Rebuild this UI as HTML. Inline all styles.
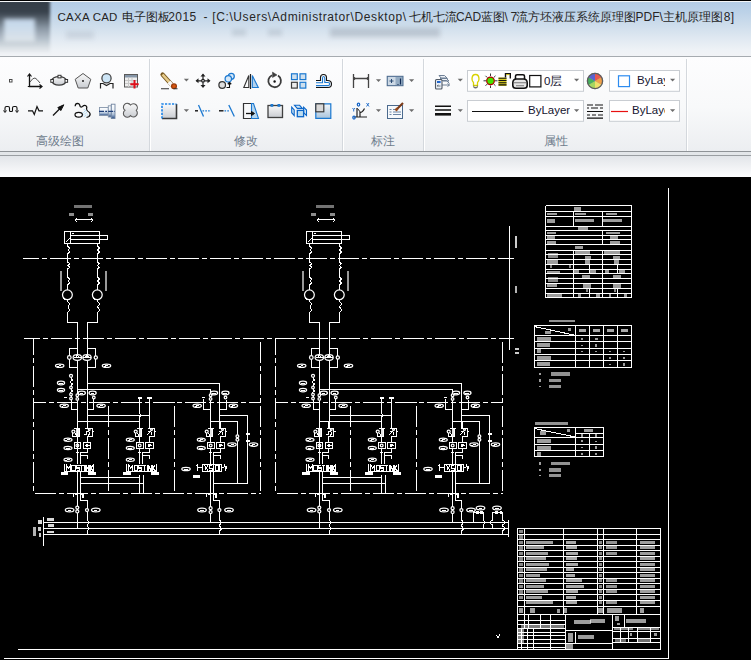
<!DOCTYPE html>
<html><head><meta charset="utf-8">
<style>
*{margin:0;padding:0;box-sizing:border-box}
html,body{width:751px;height:660px;overflow:hidden;background:#000;font-family:"Liberation Sans",sans-serif}
.abs{position:absolute}
#title{left:0;top:0;width:751px;height:57px;background:linear-gradient(180deg,#b2cbe5 0px,#bcd2e8 12px,#cfdeec 26px,#e2eaf2 40px,#eef2f6 50px,#f1f3f6 56px)}
#blob{left:-4px;top:0;width:54px;height:52px;background:linear-gradient(180deg,#333c46 0,#38414b 12px,#5a6570 19px,#8a97a4 28px,#b9c4ce 40px,#e3e7eb 50px);filter:blur(1.5px)}
#blob2{left:4px;top:19px;width:31px;height:23px;background:linear-gradient(180deg,#c3d5e8 0,#cbdcec 8px,#d5e0ea 16px,#dfe5ea 23px);filter:blur(2px)}
#ttext{left:0;top:10px;width:751px;height:18px;font-size:12px;color:#262626;white-space:nowrap}
.ts{position:absolute;top:0}
#ribbon{left:0;top:57px;width:751px;height:94px;background:linear-gradient(180deg,#fdfdfe 0,#f8f9fa 50px,#eceef1 94px)}
#band{left:0;top:151px;width:751px;height:26px;background:linear-gradient(180deg,#8f9397 0,#8f9397 1px,#e3e6e9 1px,#e3e6e9 4px,#9a9ea2 4px,#9a9ea2 5px,#e2e5e9 5px,#fdfdfe 26px)}
.sep{top:59px;width:2px;height:92px;background:linear-gradient(90deg,#d4d8dd 0,#d4d8dd 1px,#fff 1px)}
.lbl{top:133px;font-size:12px;color:#6e7c8c;white-space:nowrap}
.ct{font-size:11.5px;color:#151530;white-space:nowrap;overflow:hidden}
#canvas{left:0;top:177px;width:751px;height:483px;background:#000}
</style></head><body>
<div id="title" class="abs"></div>
<div class="abs" style="left:330px;top:28px;width:110px;height:9px;background:rgba(80,92,105,0.22);filter:blur(2.5px)"></div>
<div class="abs" style="left:232px;top:29px;width:14px;height:7px;background:rgba(80,92,105,0.15);filter:blur(2px)"></div>
<div class="abs" style="left:268px;top:29px;width:14px;height:7px;background:rgba(80,92,105,0.15);filter:blur(2px)"></div>
<div class="abs" style="left:66px;top:31px;width:28px;height:8px;background:rgba(80,92,105,0.12);filter:blur(2.5px)"></div>
<div id="blob" class="abs"></div>
<div id="blob2" class="abs"></div>
<div class="abs" style="left:0;top:0;width:751px;height:1px;background:#000"></div>
<div class="abs" style="left:0;top:1px;width:751px;height:1px;background:#f4f6f8"></div>
<div id="ttext" class="abs"><span class="ts" style="left:57.5px;top:0.5px;letter-spacing:0.25px;font-size:11.5px">CAXA CAD </span><span class="ts" style="left:122px;letter-spacing:0px;font-size:11.7px">电子图板</span><span class="ts" style="left:168.3px;letter-spacing:0.4px;font-size:12px">2015</span><span class="ts" style="left:203.5px;letter-spacing:0px;font-size:12px">-</span><span class="ts" style="left:212.2px;letter-spacing:0.62px;font-size:12px">[C:\Users\Administrator\Desktop\</span><span class="ts" style="left:408.8px;letter-spacing:0px;font-size:11.7px">七机七流</span><span class="ts" style="left:455.9px;letter-spacing:0px;font-size:12px">CAD</span><span class="ts" style="left:480.7px;letter-spacing:0px;font-size:11.7px">蓝图</span><span class="ts" style="left:504.6px;letter-spacing:0px;font-size:12px">\</span><span class="ts" style="left:510.6px;letter-spacing:0px;font-size:12px">7</span><span class="ts" style="left:516.2px;letter-spacing:0px;font-size:11.7px">流方坯液压系统原理图</span><span class="ts" style="left:635.6px;letter-spacing:0px;font-size:12px">PDF\</span><span class="ts" style="left:662.6px;letter-spacing:0px;font-size:11.7px">主机原理图</span><span class="ts" style="left:723.8px;letter-spacing:0.4px;font-size:12px">8]</span></div>
<div class="abs" style="left:0;top:56px;width:751px;height:1px;background:#a6abb0"></div>
<div id="ribbon" class="abs"></div>
<div class="sep abs" style="left:149px"></div>
<div class="sep abs" style="left:342px"></div>
<div class="sep abs" style="left:423px"></div>
<div class="sep abs" style="left:686px"></div>
<div class="lbl abs" style="left:36px">高级绘图</div>
<div class="lbl abs" style="left:234px">修改</div>
<div class="lbl abs" style="left:371px">标注</div>
<div class="lbl abs" style="left:544px">属性</div>
<div id="band" class="abs"></div>
<svg class="abs" style="left:0;top:0" width="751" height="177" viewBox="0 0 751 177">
<defs>
<linearGradient id="gg" x1="0" y1="0" x2="0" y2="1"><stop offset="0" stop-color="#fafafa"/><stop offset="1" stop-color="#c9ccd1"/></linearGradient>
<linearGradient id="gb" x1="0" y1="0" x2="0" y2="1"><stop offset="0" stop-color="#f4f8fc"/><stop offset="1" stop-color="#a9c4dc"/></linearGradient>
<linearGradient id="gcy" x1="0" y1="0" x2="0" y2="1"><stop offset="0" stop-color="#ffffff"/><stop offset="0.45" stop-color="#e8eff7"/><stop offset="0.72" stop-color="#a8bcd5"/><stop offset="1" stop-color="#2a4c85"/></linearGradient>
</defs>
<g fill="none" stroke="#3c3c3c" stroke-width="1">
<rect x="467.5" y="70.5" width="116" height="20.8" fill="#fff" stroke="#c9cdd2"/>
<rect x="467.5" y="100.5" width="116" height="20.8" fill="#fff" stroke="#c9cdd2"/>
<rect x="609.5" y="70.5" width="70" height="20.8" fill="#fff" stroke="#c9cdd2"/>
<rect x="609.5" y="100.5" width="70" height="20.8" fill="#fff" stroke="#c9cdd2"/>
<!-- panel1 row1 -->
<rect x="9.5" y="79.5" width="2.5" height="2.5" stroke="#4a4a4a" fill="#fff"/>
<path d="M29.5,75 V86.5 H41" stroke="#111" stroke-width="1.3"/>
<path d="M27.5,76.5 L29.5,74 L31.5,76.5 M39.5,84.5 L42,86.5 L39.5,88.5 M27.8,86.5 H31" stroke="#111" stroke-width="1.2"/>
<path d="M30,82 Q33,77.5 35,78 Q36.5,78.5 40,83" stroke="#555"/>
<ellipse cx="59" cy="80.8" rx="7.3" ry="4.3" fill="url(#gg)" stroke="#3a3a3a" stroke-width="1.1"/>
<rect x="58" y="75.3" width="3" height="2.6" fill="#fff" stroke="#333"/>
<rect x="50.8" y="79.5" width="2.6" height="2.8" fill="#fff" stroke="#333"/>
<rect x="65" y="79.5" width="2.6" height="2.8" fill="#fff" stroke="#333"/>
<path d="M83,73.5 L90.8,79.3 L87.8,88 H78.2 L75.2,79.3 Z" fill="url(#gg)" stroke="#555"/>
<circle cx="83" cy="81" r="1" fill="#222" stroke="none"/>
<circle cx="106.5" cy="78.3" r="4.6" fill="#cde5f6" stroke="#404040" stroke-width="1.1"/>
<path d="M100.5,88.5 V83.5 H103 L106.5,85.5 L110,83.5 H113 V88.5" stroke="#222" stroke-width="1.2"/>
<rect x="124.5" y="74.5" width="13" height="12.5" fill="#eeeeee" stroke="#5a5a5a"/>
<rect x="125" y="75" width="12" height="2.5" fill="#8696a8" stroke="none"/>
<path d="M125,80.5 H137 M125,83.5 H137 M128.5,77.5 V87 M132,77.5 V87" stroke="#c8c8c8"/>
<path d="M134.5,80 V88.5 M130.3,84.2 H138.7" stroke="#e00f1a" stroke-width="2"/>
<!-- panel1 row2 -->
<path d="M5,111.5 V108 Q5,106.5 6.5,106.5 H8 Q9.5,106.5 9.5,108 V110.5 Q9.5,111.5 10.5,111.5 H11.5 Q12.5,111.5 12.5,110.5 V108 Q12.5,106.5 14,106.5 H15.5 Q17,106.5 17,108 V111.5" stroke="#111" stroke-width="1.1"/>
<path d="M3.5,110.5 L5,112.5 L6.5,110.5 M15.5,110.5 L17,112.5 L18.5,110.5" stroke="#111"/>
<path d="M28,110.8 H32.5 L34.3,114.5 L37,106.5 L39,110.8 H43" stroke="#111" stroke-width="1.2"/>
<path d="M53,115.5 L61,107.5" stroke="#111" stroke-width="1.2"/>
<path d="M63.8,104.8 L57.8,107.6 L60.8,110.6 Z" fill="#111" stroke="#111"/>
<path d="M84,109 L86,117 M85.5,110 L88,116 M83,112 L84.5,117" stroke="#a6d8f5" stroke-width="1" stroke-dasharray="1 1"/>
<path d="M75.2,106.3 Q75,103.5 77.5,103.3 Q79.5,103.3 80,106 Q80.5,107.8 82.5,106.5 Q84,105 85.5,105.5 Q87.5,106.5 86.5,109 Q87,111.5 89.5,112.5 Q91,114.5 89,116.5 Q88,117 86.5,117.5" stroke="#111" stroke-width="1.2"/>
<ellipse cx="78.7" cy="114.7" rx="3.7" ry="2.4" fill="#fff" stroke="#111" stroke-width="1.2"/>
<rect x="99.5" y="107.5" width="8.8" height="8" fill="url(#gcy)" stroke="#8596ac" stroke-width="0.9"/>
<rect x="108.3" y="105.8" width="3" height="11.2" fill="url(#gcy)" stroke="#8596ac" stroke-width="0.9"/>
<rect x="111.3" y="104.2" width="3.7" height="14.3" fill="url(#gcy)" stroke="#6f84a0" stroke-width="0.9"/>
<path d="M99,111.4 H115" stroke="#1f3f78" stroke-width="1.1" stroke-dasharray="5 1.2 1.8 1.2"/>
<path d="M130.5,105 A3.9,3.9 0 1 1 136.3,110.3 A3.9,3.9 0 1 1 130.5,115.6 A3.9,3.9 0 1 1 124.9,110.3 A3.9,3.9 0 1 1 130.5,105 Z" fill="url(#gg)" stroke="#5a5a5a" stroke-width="1.1"/>
<!-- panel2 row1 -->
<path d="M162.5,74.5 L171.5,84.5" stroke="#7a5a22" stroke-width="4.2" stroke-linecap="round"/>
<path d="M162.5,74.5 L170,82.8" stroke="#e7cc8a" stroke-width="2.6"/>
<path d="M169,82 L172.2,85.5" stroke="#f5f5f5" stroke-width="3.8"/>
<circle cx="174" cy="86.3" r="2.4" fill="#d7560f" stroke="#9a3a08" stroke-width="0.6"/>
<path d="M161,88.8 H169 M173.5,88.8 H177.5" stroke="#333" stroke-width="1.1"/>
<g fill="#6d6d6d" stroke="none">
<path d="M183.8,78.8 H189 L186.4,81.6 Z"/><path d="M183.8,109.2 H189 L186.4,112 Z"/>
<path d="M375.9,79.3 H381.1 L378.5,82.1 Z"/><path d="M409,79.3 H414.2 L411.6,82.1 Z"/>
<path d="M375.9,109.2 H381.1 L378.5,112 Z"/><path d="M409,109.2 H414.2 L411.6,112 Z"/>
<path d="M457.7,78.8 H462.9 L460.3,81.6 Z"/><path d="M457.7,109.2 H462.9 L460.3,112 Z"/>
<path d="M574,78.8 H579.2 L576.6,81.6 Z"/><path d="M574,109.2 H579.2 L576.6,112 Z"/>
<path d="M670,78.8 H675.2 L672.6,81.6 Z"/><path d="M670,109.2 H675.2 L672.6,112 Z"/>
</g>
<path d="M196.5,80.8 H201.5 M204.5,80.8 H209.5 M203,74.5 V79.3 M203,82.3 V87" stroke="#222" stroke-width="1.2"/>
<circle cx="203" cy="80.8" r="1.4" stroke="#222"/>
<g fill="#222" stroke="none"><path d="M195.5,80.8 L198.5,78.3 V83.3 Z M210.5,80.8 L207.5,78.3 V83.3 Z M203,73.5 L200.5,76.5 H205.5 Z M203,88 L200.5,85 H205.5 Z"/></g>
<circle cx="222.2" cy="85" r="3.3" fill="#dedede" stroke="#333" stroke-width="1.1"/>
<circle cx="231.3" cy="76.3" r="3" fill="#d6e8f8" stroke="#1b78d0" stroke-width="1.1"/>
<circle cx="228.3" cy="78.8" r="3.2" fill="#d6e8f8" stroke="#1b78d0" stroke-width="1.1"/>
<path d="M226.5,87.5 H229.5 V83.5" stroke="#111" stroke-width="1.1"/>
<path d="M227.8,84 L229.5,82 L231.2,84 Z" fill="#111" stroke="#111"/>
<path d="M243.8,87.5 L248.8,75.5 V87.5 Z" stroke="#333" stroke-width="1.1"/>
<path d="M250.5,74 V89" stroke="#222" stroke-width="1.2"/>
<path d="M252.3,75.5 L258.3,87.5 H252.3 Z" fill="#b3d3ef" stroke="#1b78d0" stroke-width="1.1"/>
<path d="M278,75.6 A6.3,6.3 0 1 1 272,75.2" stroke="#3c3c3c" stroke-width="1.8"/>
<path d="M272.5,72 L277,75 L272.5,77.5 Z" fill="#3c3c3c" stroke="#3c3c3c" stroke-width="0.5"/>
<circle cx="274.6" cy="81.5" r="1.2" fill="#111" stroke="none"/>
<rect x="291.5" y="73.8" width="5.8" height="5.8" fill="#cfe0ee" stroke="#1b78d0" stroke-width="1.2"/>
<rect x="300" y="73.8" width="5.8" height="5.8" fill="#cfe0ee" stroke="#1b78d0" stroke-width="1.2"/>
<rect x="291.5" y="82.3" width="5.8" height="5.8" fill="#ececec" stroke="#3c3c3c" stroke-width="1.2"/>
<rect x="300" y="82.3" width="5.8" height="5.8" fill="#cfe0ee" stroke="#1b78d0" stroke-width="1.2"/>
<path d="M316,87.5 H328 Q331.5,87.5 331.5,84 Q331.5,80.5 327.5,80.5 H326.5 V77.5 Q326.5,74.5 323.5,74.5 Q320.5,74.5 320.5,77.5 V80.5 H316" stroke="#111" stroke-width="1.1"/>
<path d="M316,82.8 H322.5 V78.5 Q322.5,76.5 323.5,76.5 Q324.8,76.5 324.8,78.5 V82.5 H328 Q329.8,82.5 329.8,84 Q329.8,85.6 328,85.6 H316" stroke="#1b78d0" stroke-width="1.1"/>
<!-- panel2 row2 -->
<rect x="162" y="104" width="14.5" height="14.5" fill="url(#gg)" stroke="none"/>
<path d="M176.5,104 V118.5 H162" stroke="#3a3a3a" stroke-width="1.6"/>
<path d="M162,118.5 V104 H176.5" stroke="#1b82e8" stroke-width="1.6" stroke-dasharray="2.2 1.3"/>
<path d="M195,110.8 H198" stroke="#111" stroke-width="1.4"/>
<path d="M198.5,105 L203.5,116.5" stroke="#1b78d0" stroke-width="1.3"/>
<path d="M202.5,110.8 H211" stroke="#1b78d0" stroke-width="1.3" stroke-dasharray="1.6 1.2"/>
<path d="M219,110.8 H223.5" stroke="#111" stroke-width="1.4"/>
<path d="M224.5,110.8 H229" stroke="#1b78d0" stroke-width="1.3" stroke-dasharray="1.6 1.2"/>
<path d="M228.8,105 L234.3,116.5" stroke="#1b78d0" stroke-width="1.3"/>
<path d="M251.5,103.5 H243.5 V118.5 H251.5" stroke="#333" stroke-width="1.2"/>
<path d="M251.5,103.5 H253.5 L258.5,118.5 H251.5 Z" fill="#b6d6ee" stroke="#1b78d0" stroke-width="1.1"/>
<path d="M246,113.5 H252" stroke="#111" stroke-width="1.3"/>
<path d="M251.5,111.5 L254.5,113.5 L251.5,115.5 Z" fill="#111" stroke="#111"/>
<rect x="268" y="105.5" width="14.5" height="12" fill="url(#gg)" stroke="#404040" stroke-width="1.3"/>
<rect x="270.5" y="104" width="2.8" height="2.8" fill="#1b78d0" stroke="none"/>
<rect x="277.5" y="104" width="2.8" height="2.8" fill="#1b78d0" stroke="none"/>
<g stroke="#0b66c9" stroke-width="1.1" fill="#d3e8f6">
<path d="M294.5,105.3 H299.6 L302.4,108.4 H297.3 Z"/>
<path d="M291.7,107.2 L294.2,110 V115.5 L291.7,112.7 Z"/>
<path d="M303.6,107.2 L306.5,110 V115.5 L303.6,112.7 Z"/>
<rect x="297.3" y="110.4" width="6.3" height="6.3" fill="#bcdcf0" stroke-width="1.3"/>
</g>
<path d="M315.8,103.8 H330.8 V118.3 H315.8 Z" fill="url(#gb)" stroke="#1b78d0" stroke-width="1.2"/>
<rect x="315.8" y="103.8" width="8" height="8" fill="#d9d9d9" stroke="#3a3a3a" stroke-width="1.2"/>
<!-- panel3 -->
<path d="M353.5,74 V88 M368.5,74 V88 M353.5,78.5 H368.5" stroke="#444" stroke-width="1.3"/>
<path d="M355,77 L353.8,78.5 L355,80 M367,77 L368.2,78.5 L367,80" stroke="#444"/>
<rect x="387.2" y="76.3" width="15.8" height="9.4" fill="#94abc2" stroke="#4b6a8e"/>
<rect x="388" y="77" width="7.5" height="8" fill="#cdd9e5" stroke="none"/>
<path d="M389.5,81 H393.5 M391.5,79 V83" stroke="#2a4a72"/>
<path d="M397.5,84.5 H398.5 M400.5,78.5 V84.5" stroke="#112a55" stroke-width="1.2"/>
<path d="M357,108 V117.5 M353.5,117 H367 M360,117.5 V112.5 Q362.5,112.5 364.5,108.5" stroke="#222" stroke-width="1.2"/>
<path d="M357.5,108.5 L361,113" stroke="#222"/>
<g stroke="#1565c8" stroke-width="0.9"><ellipse cx="358.5" cy="104.5" rx="1.2" ry="1.5"/><ellipse cx="354" cy="117.5" rx="1.2" ry="1.5"/><path d="M352.5,108 L353.7,109.5 L355,108 M353.7,109.5 V111.5 M366.5,103 L369,106.5 M369,103 L366.5,106.5"/></g>
<rect x="387.5" y="105.5" width="15" height="13" fill="#f6f9fc" stroke="#4b6a8e"/>
<path d="M389.5,109.5 H391.5 M389.5,112 H391.5 M389.5,114.5 H391.5 M393,112 H401 M393,114.5 H401 M393,109.5 H396" stroke="#6c86a6"/>
<path d="M396.5,109.5 L403,103" stroke="#7a3a18" stroke-width="2.2"/>
<path d="M395.5,110.5 L397.5,108.5" stroke="#9a4a1a" stroke-width="2.6"/>
<!-- panel4 -->
<path d="M439,75.5 H444.5 L447.5,78.5 H441.5 Z M440,78 H446 L449,81 H443 Z M440.5,80.5 H446.5 L449.5,83.5" stroke="#6f8096" stroke-width="1" fill="#eef2f7"/>
<path d="M441.5,85 L449.5,85 M447.5,83.5 L449.5,85 L447.5,86.5" stroke="#6f8096"/>
<rect x="435.5" y="79.5" width="6.5" height="9.5" rx="1" fill="#e8eef5" stroke="#505a66" stroke-width="1.1"/>
<rect x="437" y="81" width="3.6" height="2" fill="#2266cc" stroke="none"/>
<path d="M437,86 H440.5 M437,86 L438.5,85" stroke="#505a66" stroke-width="0.8"/>
<path d="M435,106.2 H451 M435,110 H451" stroke="#111" stroke-width="1.6"/>
<path d="M435,114.3 H451" stroke="#111" stroke-width="2.6"/>
<path d="M472,79 Q472,74.5 475.5,74.5 Q479,74.5 479,79 Q479,81 477.5,82.5 V85.5 H473.5 V82.5 Q472,81 472,79 Z" fill="#fff" stroke="#d8d200" stroke-width="1.3"/>
<path d="M473.8,85.5 V87.5 H477.3 V85.5 M474.5,88 H476.5" stroke="#666" stroke-width="0.9"/>
<path d="M490.5,73.5 V76 M490.5,85.5 V88 M483.5,80.8 H486 M495,80.8 H497.5 M485.5,75.8 L487.3,77.6 M493.7,84 L495.5,85.8 M495.5,75.8 L493.7,77.6 M487.3,84 L485.5,85.8" stroke="#222" stroke-width="0.9"/>
<circle cx="490.5" cy="80.8" r="3.8" fill="#44e400" stroke="#b20000" stroke-width="1.1"/>
<rect x="498.5" y="77.5" width="8" height="8.5" fill="#d8cc20" stroke="none"/>
<path d="M498.5,78.3 H506.5 M498.5,80.5 H506.5 M498.5,82.7 H506.5 M498.5,84.9 H506.5" stroke="#111" stroke-width="1.1"/>
<path d="M505.5,77.5 V73.8 H510.3 V78.5" stroke="#111" stroke-width="1.4"/>
<path d="M506.2,74.6 H509.5" stroke="#e0d000" stroke-width="0.9"/>
<path d="M515.5,79 V76 Q515.5,74.8 517,74.8 H523 Q524.5,74.8 524.5,76 V79" fill="#fff" stroke="#111" stroke-width="1.5"/>
<path d="M512.8,83 Q512.8,79 516.5,79 H523.5 Q527.2,79 527.2,83 V85.5 Q527.2,88.3 524,88.3 H516 Q512.8,88.3 512.8,85.5 Z" fill="#e6e6e6" stroke="#111" stroke-width="1.6"/>
<path d="M514,82.8 H526 M516,85.8 H524" stroke="#777" stroke-width="1.1"/>
<rect x="529.7" y="75.5" width="11.2" height="11.4" fill="#fff" stroke="#111" stroke-width="1.2"/>
<path d="M472,111.5 H523.5" stroke="#111" stroke-width="1"/>
<circle cx="595" cy="81" r="8.2" fill="#999" stroke="none"/>
<path d="M595,81 L595,73.5 A7.5,7.5 0 0 1 601.5,77.2 Z" fill="#e8584e" stroke="none"/>
<path d="M595,81 L601.5,77.2 A7.5,7.5 0 0 1 601.5,84.8 Z" fill="#f0a04a" stroke="none"/>
<path d="M595,81 L601.5,84.8 A7.5,7.5 0 0 1 595,88.5 Z" fill="#f0df6a" stroke="none"/>
<path d="M595,81 L595,88.5 A7.5,7.5 0 0 1 588.5,84.8 Z" fill="#a6d65e" stroke="none"/>
<path d="M595,81 L588.5,84.8 A7.5,7.5 0 0 1 588.5,77.2 Z" fill="#46b05e" stroke="none"/>
<path d="M595,81 L588.5,77.2 A7.5,7.5 0 0 1 595,73.5 Z" fill="#5b62cf" stroke="none"/>
<circle cx="595" cy="81" r="7.6" fill="none" stroke="#5d5d5d" stroke-width="1.4"/>
<path d="M587,105 H593 M595,105 H603 M587,108 H589 M591,108 H598 M600,108 H603 M587,111.5 H603 M587,115 H590 M592,115 H596 M598,115 H603 M587,118.2 H603" stroke="#111" stroke-width="1.2"/>
<rect x="618.5" y="75.8" width="11" height="10.8" fill="#fff" stroke="#2d8cf0" stroke-width="1.2"/>
<path d="M611,111.5 H628" stroke="#e81010" stroke-width="1.2"/>
</g>
</svg>
<div class="abs ct" style="left:544px;top:74px">0层</div>
<div class="abs ct" style="left:528px;top:104px">ByLayer</div>
<div class="abs ct" style="left:637px;top:74px;width:28px">ByLayer</div>
<div class="abs ct" style="left:632px;top:104px;width:33px">ByLayer</div>
<div id="canvas" class="abs"></div>
<svg class="abs" style="left:0;top:0" width="751" height="660" viewBox="0 0 751 660" shape-rendering="crispEdges">
<g fill="none" stroke="#fff" stroke-width="1">
<path d="M545.7,205.5 H631.5 M545.7,211.2 H631.5 M545.7,216.5 H631.5 M545.7,226.3 H631.5 M545.7,230.4 H631.5 M545.7,235.1 H631.5 M545.7,239.8 H631.5 M545.7,244.9 H631.5 M545.7,250.0 H631.5 M545.7,254.6 H631.5 M545.7,259.2 H631.5 M545.7,264.3 H631.5 M545.7,269.4 H631.5 M545.7,273.8 H631.5 M545.7,278.6 H631.5 M545.7,283.4 H631.5 M545.7,288.2 H631.5 M545.7,293.2 H631.5 M545.7,297.5 H631.5 M545.7,205.5 V297.5 M631.5,205.5 V297.5 M573.4,211.2 V226.3 M602.4,211.2 V226.3 M602.4,230.4 V244.9 M573.4,250.0 V297.5 M602.4,250.0 V297.5 M589,264.3 V273.8 M617.1,264.3 V273.8 M589,288.2 V297.5 M617.1,288.2 V297.5 "/>
<rect x="574" y="206.5" width="7.00" height="4.00" fill="#fff" fill-opacity="0.616" stroke="none"/><rect x="546.5" y="212.5" width="10.50" height="2.80" fill="#fff" fill-opacity="0.616" stroke="none"/><rect x="575" y="212.5" width="11.00" height="2.80" fill="#fff" fill-opacity="0.616" stroke="none"/><rect x="605.5" y="212.5" width="11.50" height="2.80" fill="#fff" fill-opacity="0.616" stroke="none"/><rect x="547" y="219" width="8.00" height="3.50" fill="#fff" fill-opacity="0.616" stroke="none"/><rect x="575" y="219" width="19.00" height="3.00" fill="#fff" fill-opacity="0.616" stroke="none"/><rect x="603" y="219" width="19.00" height="3.00" fill="#fff" fill-opacity="0.616" stroke="none"/><rect x="578" y="227.2" width="10.00" height="2.40" fill="#fff" fill-opacity="0.616" stroke="none"/><rect x="546.5" y="231.5" width="9.50" height="2.50" fill="#fff" fill-opacity="0.616" stroke="none"/><rect x="606" y="231.5" width="14.00" height="2.50" fill="#fff" fill-opacity="0.616" stroke="none"/><rect x="546.5" y="236" width="8.50" height="3.00" fill="#fff" fill-opacity="0.616" stroke="none"/><rect x="610" y="236" width="8.00" height="3.00" fill="#fff" fill-opacity="0.616" stroke="none"/><rect x="546.5" y="240.8" width="9.50" height="3.20" fill="#fff" fill-opacity="0.616" stroke="none"/><rect x="610" y="240.8" width="10.00" height="3.20" fill="#fff" fill-opacity="0.616" stroke="none"/><rect x="575" y="245.8" width="8.00" height="3.40" fill="#fff" fill-opacity="0.616" stroke="none"/><rect x="575" y="250.8" width="15.00" height="2.70" fill="#fff" fill-opacity="0.616" stroke="none"/><rect x="604" y="250.8" width="16.00" height="2.70" fill="#fff" fill-opacity="0.616" stroke="none"/><rect x="548" y="252.5" width="10.00" height="5.00" fill="#fff" fill-opacity="0.528" stroke="none"/><rect x="585" y="255.5" width="6.00" height="3.00" fill="#fff" fill-opacity="0.616" stroke="none"/><rect x="613" y="255.5" width="7.00" height="3.00" fill="#fff" fill-opacity="0.616" stroke="none"/><rect x="546.5" y="260" width="11.50" height="3.50" fill="#fff" fill-opacity="0.616" stroke="none"/><rect x="585" y="260" width="5.00" height="3.50" fill="#fff" fill-opacity="0.616" stroke="none"/><rect x="614" y="260" width="5.00" height="3.50" fill="#fff" fill-opacity="0.616" stroke="none"/><rect x="550" y="265" width="2.00" height="3.00" fill="#fff" fill-opacity="0.528" stroke="none"/><rect x="569" y="265" width="2.00" height="3.00" fill="#fff" fill-opacity="0.528" stroke="none"/><rect x="546.5" y="270.5" width="13.50" height="2.80" fill="#fff" fill-opacity="0.616" stroke="none"/><rect x="574" y="270" width="5.00" height="3.30" fill="#fff" fill-opacity="0.616" stroke="none"/><rect x="590" y="270" width="6.00" height="3.30" fill="#fff" fill-opacity="0.616" stroke="none"/><rect x="605" y="270" width="4.00" height="3.30" fill="#fff" fill-opacity="0.616" stroke="none"/><rect x="619" y="270" width="6.00" height="3.30" fill="#fff" fill-opacity="0.616" stroke="none"/><rect x="582" y="274.8" width="8.00" height="3.00" fill="#fff" fill-opacity="0.616" stroke="none"/><rect x="613" y="274.8" width="8.00" height="3.00" fill="#fff" fill-opacity="0.616" stroke="none"/><rect x="548" y="277" width="10.00" height="5.00" fill="#fff" fill-opacity="0.528" stroke="none"/><rect x="583" y="284.2" width="8.00" height="3.30" fill="#fff" fill-opacity="0.616" stroke="none"/><rect x="613" y="284.2" width="8.00" height="3.30" fill="#fff" fill-opacity="0.616" stroke="none"/><rect x="546.5" y="284" width="10.50" height="3.30" fill="#fff" fill-opacity="0.616" stroke="none"/><rect x="586" y="289" width="2.00" height="3.00" fill="#fff" fill-opacity="0.528" stroke="none"/><rect x="614" y="289" width="2.00" height="3.00" fill="#fff" fill-opacity="0.528" stroke="none"/><rect x="546.5" y="294" width="15.50" height="3.00" fill="#fff" fill-opacity="0.616" stroke="none"/><rect x="578" y="294" width="3.00" height="3.00" fill="#fff" fill-opacity="0.616" stroke="none"/><rect x="596" y="294" width="4.00" height="3.00" fill="#fff" fill-opacity="0.616" stroke="none"/><rect x="609" y="294" width="2.00" height="3.00" fill="#fff" fill-opacity="0.616" stroke="none"/><rect x="624" y="294" width="3.00" height="3.00" fill="#fff" fill-opacity="0.616" stroke="none"/>
<path d="M534.2,325.5 H631.5 M534.2,335.8 H631.5 M534.2,341.8 H631.5 M534.2,348.3 H631.5 M534.2,354.7 H631.5 M534.2,360.8 H631.5 M534.2,367.6 H631.5 M534.2,325.5 V367.6 M631.5,325.5 V367.6 M575.2,325.5 V367.6 M589.5,325.5 V367.6 M603.5,325.5 V367.6 M617.6,325.5 V367.6 M534.2,326.5 L575.2,335.3 "/>
<rect x="549" y="319.5" width="26.00" height="2.50" fill="#fff" fill-opacity="0.5720000000000001" stroke="none"/><rect x="545" y="330.5" width="6.00" height="3.50" fill="#fff" fill-opacity="0.616" stroke="none"/><rect x="568" y="327.5" width="3.00" height="3.50" fill="#fff" fill-opacity="0.616" stroke="none"/><rect x="578.7" y="328.5" width="7.30" height="3.50" fill="#fff" fill-opacity="0.66" stroke="none"/><rect x="593.0" y="328.5" width="7.00" height="3.50" fill="#fff" fill-opacity="0.66" stroke="none"/><rect x="607.0" y="328.5" width="7.10" height="3.50" fill="#fff" fill-opacity="0.66" stroke="none"/><rect x="621.1" y="328.5" width="6.90" height="3.50" fill="#fff" fill-opacity="0.66" stroke="none"/><rect x="536.5" y="336.8" width="14.50" height="3.70" fill="#fff" fill-opacity="0.616" stroke="none"/><rect x="536.5" y="343" width="13.50" height="4.00" fill="#fff" fill-opacity="0.616" stroke="none"/><rect x="536.5" y="349.2" width="4.50" height="3.80" fill="#fff" fill-opacity="0.616" stroke="none"/><rect x="536.5" y="355.7" width="14.50" height="3.80" fill="#fff" fill-opacity="0.616" stroke="none"/><rect x="536.5" y="361.8" width="13.50" height="4.20" fill="#fff" fill-opacity="0.616" stroke="none"/><rect x="581" y="337.8" width="2.00" height="2.00" fill="#fff" fill-opacity="0.616" stroke="none"/><rect x="595" y="337.8" width="3.00" height="2.00" fill="#fff" fill-opacity="0.616" stroke="none"/><rect x="581" y="344.5" width="2.00" height="1.30" fill="#fff" fill-opacity="0.616" stroke="none"/><rect x="595" y="344" width="2.00" height="2.50" fill="#fff" fill-opacity="0.616" stroke="none"/><rect x="581" y="350.8" width="2.00" height="1.20" fill="#fff" fill-opacity="0.616" stroke="none"/><rect x="595" y="350.8" width="2.00" height="1.20" fill="#fff" fill-opacity="0.616" stroke="none"/><rect x="609" y="350.8" width="2.00" height="1.20" fill="#fff" fill-opacity="0.616" stroke="none"/><rect x="623" y="350.8" width="2.00" height="1.20" fill="#fff" fill-opacity="0.616" stroke="none"/><rect x="609" y="357" width="2.00" height="1.50" fill="#fff" fill-opacity="0.616" stroke="none"/><rect x="623" y="357" width="2.00" height="1.50" fill="#fff" fill-opacity="0.616" stroke="none"/><rect x="609" y="363.5" width="2.00" height="1.50" fill="#fff" fill-opacity="0.616" stroke="none"/><rect x="623" y="363" width="2.00" height="3.00" fill="#fff" fill-opacity="0.616" stroke="none"/><rect x="539" y="372.5" width="2.00" height="2.00" fill="#fff" fill-opacity="0.616" stroke="none"/><rect x="551" y="372" width="19.00" height="3.50" fill="#fff" fill-opacity="0.5720000000000001" stroke="none"/><rect x="538.5" y="379" width="2.00" height="2.50" fill="#fff" fill-opacity="0.616" stroke="none"/><rect x="548.5" y="378.5" width="12.50" height="3.50" fill="#fff" fill-opacity="0.5720000000000001" stroke="none"/><rect x="538.5" y="385.5" width="2.00" height="1.30" fill="#fff" fill-opacity="0.616" stroke="none"/><rect x="548.5" y="384.5" width="12.50" height="3.50" fill="#fff" fill-opacity="0.5720000000000001" stroke="none"/>
<path d="M534.2,427.5 H603.7 M575.3,433 H603.7 M534.2,437.5 H603.7 M534.2,444.2 H603.7 M534.2,450.8 H603.7 M534.2,456.7 H603.7 M534.2,427.5 V456.7 M603.7,427.5 V456.7 M575.3,427.5 V456.7 M589.5,433 V456.7 M534.2,428.5 L575.3,437"/>
<rect x="535" y="421.5" width="33.00" height="3.00" fill="#fff" fill-opacity="0.5720000000000001" stroke="none"/><rect x="540" y="431" width="6.00" height="4.00" fill="#fff" fill-opacity="0.616" stroke="none"/><rect x="567" y="428.5" width="3.00" height="3.50" fill="#fff" fill-opacity="0.616" stroke="none"/><rect x="584" y="428.5" width="9.00" height="3.50" fill="#fff" fill-opacity="0.616" stroke="none"/><rect x="581" y="434.2" width="2.00" height="2.30" fill="#fff" fill-opacity="0.616" stroke="none"/><rect x="595" y="434.2" width="2.00" height="2.30" fill="#fff" fill-opacity="0.616" stroke="none"/><rect x="536.5" y="438.8" width="14.50" height="4.20" fill="#fff" fill-opacity="0.616" stroke="none"/><rect x="536.5" y="445.5" width="14.50" height="4.00" fill="#fff" fill-opacity="0.616" stroke="none"/><rect x="536.5" y="452" width="4.50" height="3.50" fill="#fff" fill-opacity="0.616" stroke="none"/><rect x="581" y="440" width="2.00" height="2.00" fill="#fff" fill-opacity="0.616" stroke="none"/><rect x="595" y="440.5" width="2.00" height="1.50" fill="#fff" fill-opacity="0.616" stroke="none"/><rect x="581" y="447" width="2.00" height="1.00" fill="#fff" fill-opacity="0.616" stroke="none"/><rect x="595" y="446" width="2.00" height="3.00" fill="#fff" fill-opacity="0.616" stroke="none"/><rect x="581" y="453.3" width="2.00" height="1.20" fill="#fff" fill-opacity="0.616" stroke="none"/><rect x="595" y="453.3" width="2.00" height="1.20" fill="#fff" fill-opacity="0.616" stroke="none"/><rect x="539" y="462" width="2.00" height="2.50" fill="#fff" fill-opacity="0.616" stroke="none"/><rect x="551" y="461.5" width="19.00" height="3.50" fill="#fff" fill-opacity="0.5720000000000001" stroke="none"/><rect x="538.5" y="469" width="2.00" height="1.50" fill="#fff" fill-opacity="0.616" stroke="none"/><rect x="548.5" y="468" width="12.50" height="3.50" fill="#fff" fill-opacity="0.5720000000000001" stroke="none"/><rect x="538.5" y="474.8" width="2.00" height="1.20" fill="#fff" fill-opacity="0.616" stroke="none"/><rect x="548.5" y="473.8" width="12.50" height="3.50" fill="#fff" fill-opacity="0.5720000000000001" stroke="none"/>
<path d="M517.4,528.6 H660.6 M517.4,534.1 H660.6 M517.4,539.6 H660.6 M517.4,545.1 H660.6 M517.4,550.6 H660.6 M517.4,556.1 H660.6 M517.4,561.6 H660.6 M517.4,567.1 H660.6 M517.4,572.6 H660.6 M517.4,578.1 H660.6 M517.4,583.6 H660.6 M517.4,589.1 H660.6 M517.4,594.6 H660.6 M517.4,600.1 H660.6 M517.4,606.5 H660.6 M517.4,614 H660.6 M517.4,528.6 V650 M660.6,528.6 V650 M524,528.6 V614 M563.6,528.6 V614 M597,528.6 V614 M603,528.6 V614 M636.6,528.6 V614 M517.4,620.5 H565 M517.4,624.5 H565 M517.4,628 H565 M517.4,632 H565 M517.4,635.6 H565 M517.4,639.5 H565 M517.4,643.5 H565 M517.4,647 H565 M524,614 V628 M528.5,614 V628 M540.5,614 V628 M550.5,614 V650 M565,614 V650 M521.5,628 V650 M527,628 V650 M533,628 V650 M565,630.5 H612.2 M565,643 H612.2 M575,631.5 V643 M612.2,614 V650 M612.2,627 H660.6 M612.2,631 H660.6 M612.2,638.5 H660.6 M612.2,642.5 H660.6 M624.5,614 V627 M620,627 V642.5 M628.5,627 V642.5 M637,627 V642.5 M650.5,627 V642.5 "/>
<rect x="518.5" y="529.8000000000001" width="4.30" height="3.30" fill="#fff" fill-opacity="0.528" stroke="none"/><rect x="518.5" y="535.3000000000001" width="4.30" height="3.30" fill="#fff" fill-opacity="0.528" stroke="none"/><rect x="518.5" y="540.8000000000001" width="4.30" height="3.30" fill="#fff" fill-opacity="0.528" stroke="none"/><rect x="518.5" y="546.3000000000001" width="4.30" height="3.30" fill="#fff" fill-opacity="0.528" stroke="none"/><rect x="518.5" y="551.8000000000001" width="4.30" height="3.30" fill="#fff" fill-opacity="0.528" stroke="none"/><rect x="518.5" y="557.3000000000001" width="4.30" height="3.30" fill="#fff" fill-opacity="0.528" stroke="none"/><rect x="518.5" y="562.8000000000001" width="4.30" height="3.30" fill="#fff" fill-opacity="0.528" stroke="none"/><rect x="518.5" y="568.3000000000001" width="4.30" height="3.30" fill="#fff" fill-opacity="0.528" stroke="none"/><rect x="518.5" y="573.8000000000001" width="4.30" height="3.30" fill="#fff" fill-opacity="0.528" stroke="none"/><rect x="518.5" y="579.3000000000001" width="4.30" height="3.30" fill="#fff" fill-opacity="0.528" stroke="none"/><rect x="518.5" y="584.8000000000001" width="4.30" height="3.30" fill="#fff" fill-opacity="0.528" stroke="none"/><rect x="518.5" y="590.3000000000001" width="4.30" height="3.30" fill="#fff" fill-opacity="0.528" stroke="none"/><rect x="518.5" y="595.8000000000001" width="4.30" height="3.30" fill="#fff" fill-opacity="0.528" stroke="none"/><rect x="525.5" y="540.9" width="27.00" height="3.00" fill="#fff" fill-opacity="0.616" stroke="none"/><rect x="525.5" y="546.4" width="18.00" height="3.00" fill="#fff" fill-opacity="0.616" stroke="none"/><rect x="525.5" y="551.9" width="22.00" height="3.00" fill="#fff" fill-opacity="0.616" stroke="none"/><rect x="525.5" y="557.4" width="20.00" height="3.00" fill="#fff" fill-opacity="0.616" stroke="none"/><rect x="525.5" y="562.9" width="23.00" height="3.00" fill="#fff" fill-opacity="0.616" stroke="none"/><rect x="525.5" y="568.4" width="21.00" height="3.00" fill="#fff" fill-opacity="0.616" stroke="none"/><rect x="525.5" y="573.9" width="14.00" height="3.00" fill="#fff" fill-opacity="0.616" stroke="none"/><rect x="525.5" y="579.4" width="20.00" height="3.00" fill="#fff" fill-opacity="0.616" stroke="none"/><rect x="525.5" y="584.9" width="18.00" height="3.00" fill="#fff" fill-opacity="0.616" stroke="none"/><rect x="525.5" y="590.4" width="22.00" height="3.00" fill="#fff" fill-opacity="0.616" stroke="none"/><rect x="525.5" y="595.9" width="16.00" height="3.00" fill="#fff" fill-opacity="0.616" stroke="none"/><rect x="525.5" y="601.4" width="27.00" height="3.00" fill="#fff" fill-opacity="0.616" stroke="none"/><rect x="565.5" y="540.9" width="10.00" height="3.00" fill="#fff" fill-opacity="0.66" stroke="none"/><rect x="598.5" y="540.9" width="3.00" height="3.00" fill="#fff" fill-opacity="0.528" stroke="none"/><rect x="565.5" y="546.4" width="11.00" height="3.00" fill="#fff" fill-opacity="0.66" stroke="none"/><rect x="598.5" y="546.4" width="3.00" height="3.00" fill="#fff" fill-opacity="0.528" stroke="none"/><rect x="565.5" y="551.9" width="12.00" height="3.00" fill="#fff" fill-opacity="0.66" stroke="none"/><rect x="598.5" y="551.9" width="3.00" height="3.00" fill="#fff" fill-opacity="0.528" stroke="none"/><rect x="565.5" y="557.4" width="11.00" height="3.00" fill="#fff" fill-opacity="0.66" stroke="none"/><rect x="598.5" y="557.4" width="3.00" height="3.00" fill="#fff" fill-opacity="0.528" stroke="none"/><rect x="565.5" y="562.9" width="12.00" height="3.00" fill="#fff" fill-opacity="0.66" stroke="none"/><rect x="598.5" y="562.9" width="3.00" height="3.00" fill="#fff" fill-opacity="0.528" stroke="none"/><rect x="565.5" y="568.4" width="8.00" height="3.00" fill="#fff" fill-opacity="0.66" stroke="none"/><rect x="598.5" y="568.4" width="3.00" height="3.00" fill="#fff" fill-opacity="0.528" stroke="none"/><rect x="565.5" y="573.9" width="9.00" height="3.00" fill="#fff" fill-opacity="0.66" stroke="none"/><rect x="598.5" y="573.9" width="3.00" height="3.00" fill="#fff" fill-opacity="0.528" stroke="none"/><rect x="565.5" y="579.4" width="16.00" height="3.00" fill="#fff" fill-opacity="0.66" stroke="none"/><rect x="598.5" y="579.4" width="3.00" height="3.00" fill="#fff" fill-opacity="0.528" stroke="none"/><rect x="565.5" y="584.9" width="18.00" height="3.00" fill="#fff" fill-opacity="0.66" stroke="none"/><rect x="598.5" y="584.9" width="3.00" height="3.00" fill="#fff" fill-opacity="0.528" stroke="none"/><rect x="565.5" y="590.4" width="12.00" height="3.00" fill="#fff" fill-opacity="0.66" stroke="none"/><rect x="598.5" y="590.4" width="3.00" height="3.00" fill="#fff" fill-opacity="0.528" stroke="none"/><rect x="565.5" y="595.9" width="10.00" height="3.00" fill="#fff" fill-opacity="0.66" stroke="none"/><rect x="598.5" y="595.9" width="3.00" height="3.00" fill="#fff" fill-opacity="0.528" stroke="none"/><rect x="565.5" y="601.4" width="11.00" height="3.00" fill="#fff" fill-opacity="0.66" stroke="none"/><rect x="598.5" y="601.4" width="3.00" height="3.00" fill="#fff" fill-opacity="0.528" stroke="none"/><rect x="606" y="540.9" width="11.00" height="3.00" fill="#fff" fill-opacity="0.5720000000000001" stroke="none"/><rect x="606" y="546.4" width="11.00" height="3.00" fill="#fff" fill-opacity="0.5720000000000001" stroke="none"/><rect x="606" y="551.9" width="11.00" height="3.00" fill="#fff" fill-opacity="0.5720000000000001" stroke="none"/><rect x="606" y="579.4" width="11.00" height="3.00" fill="#fff" fill-opacity="0.5720000000000001" stroke="none"/><rect x="606" y="584.9" width="11.00" height="3.00" fill="#fff" fill-opacity="0.5720000000000001" stroke="none"/><rect x="606" y="590.4" width="11.00" height="3.00" fill="#fff" fill-opacity="0.5720000000000001" stroke="none"/><rect x="606" y="601.4" width="11.00" height="3.00" fill="#fff" fill-opacity="0.5720000000000001" stroke="none"/><rect x="640" y="540.9" width="15.00" height="3.00" fill="#fff" fill-opacity="0.616" stroke="none"/><rect x="640" y="546.4" width="15.00" height="3.00" fill="#fff" fill-opacity="0.616" stroke="none"/><rect x="640" y="551.9" width="15.00" height="3.00" fill="#fff" fill-opacity="0.616" stroke="none"/><rect x="640" y="557.4" width="15.00" height="3.00" fill="#fff" fill-opacity="0.616" stroke="none"/><rect x="640" y="562.9" width="15.00" height="3.00" fill="#fff" fill-opacity="0.616" stroke="none"/><rect x="640" y="568.4" width="15.00" height="3.00" fill="#fff" fill-opacity="0.616" stroke="none"/><rect x="640" y="573.9" width="15.00" height="3.00" fill="#fff" fill-opacity="0.616" stroke="none"/><rect x="640" y="579.4" width="15.00" height="3.00" fill="#fff" fill-opacity="0.616" stroke="none"/><rect x="640" y="584.9" width="15.00" height="3.00" fill="#fff" fill-opacity="0.616" stroke="none"/><rect x="640" y="590.4" width="15.00" height="3.00" fill="#fff" fill-opacity="0.616" stroke="none"/><rect x="640" y="595.9" width="15.00" height="3.00" fill="#fff" fill-opacity="0.616" stroke="none"/><rect x="640" y="601.4" width="15.00" height="3.00" fill="#fff" fill-opacity="0.616" stroke="none"/><rect x="519" y="607.5" width="4.00" height="5.00" fill="#fff" fill-opacity="0.616" stroke="none"/><rect x="530" y="607.5" width="5.00" height="5.00" fill="#fff" fill-opacity="0.616" stroke="none"/><rect x="557" y="609" width="3.00" height="3.50" fill="#fff" fill-opacity="0.616" stroke="none"/><rect x="564" y="607.5" width="3.00" height="5.00" fill="#fff" fill-opacity="0.616" stroke="none"/><rect x="597.5" y="607.5" width="5.50" height="5.00" fill="#fff" fill-opacity="0.616" stroke="none"/><rect x="606.5" y="607.5" width="15.50" height="5.00" fill="#fff" fill-opacity="0.616" stroke="none"/><rect x="640" y="607.5" width="4.00" height="5.00" fill="#fff" fill-opacity="0.616" stroke="none"/><rect x="521" y="624.8" width="43.00" height="2.70" fill="#fff" fill-opacity="0.48400000000000004" stroke="none"/><rect x="518" y="628.5" width="6.00" height="3.50" fill="#fff" fill-opacity="0.528" stroke="none"/><rect x="518" y="632.5" width="6.00" height="2.50" fill="#fff" fill-opacity="0.528" stroke="none"/><rect x="518" y="636" width="6.00" height="3.00" fill="#fff" fill-opacity="0.528" stroke="none"/><rect x="518" y="640" width="6.00" height="3.00" fill="#fff" fill-opacity="0.528" stroke="none"/><rect x="590" y="618.5" width="15.00" height="4.00" fill="#fff" fill-opacity="0.616" stroke="none"/><rect x="574" y="620" width="17.00" height="4.00" fill="#fff" fill-opacity="0.616" stroke="none"/><rect x="568" y="632.5" width="5.00" height="9.50" fill="#fff" fill-opacity="0.616" stroke="none"/><rect x="578" y="634.5" width="16.00" height="4.50" fill="#fff" fill-opacity="0.616" stroke="none"/><rect x="615" y="616" width="4.00" height="5.00" fill="#fff" fill-opacity="0.616" stroke="none"/><rect x="617" y="623" width="3.00" height="2.00" fill="#fff" fill-opacity="0.616" stroke="none"/><rect x="626" y="619" width="20.00" height="4.00" fill="#fff" fill-opacity="0.616" stroke="none"/><rect x="614" y="628" width="19.00" height="2.30" fill="#fff" fill-opacity="0.528" stroke="none"/><rect x="637" y="628" width="22.00" height="2.30" fill="#fff" fill-opacity="0.528" stroke="none"/><rect x="630" y="633" width="2.00" height="3.00" fill="#fff" fill-opacity="0.616" stroke="none"/><rect x="654" y="633" width="3.00" height="3.00" fill="#fff" fill-opacity="0.616" stroke="none"/><rect x="615" y="639.2" width="11.00" height="2.60" fill="#fff" fill-opacity="0.44" stroke="none"/><rect x="637" y="639.2" width="13.00" height="2.60" fill="#fff" fill-opacity="0.44" stroke="none"/><rect x="566" y="644" width="7.00" height="5.00" fill="#fff" fill-opacity="0.616" stroke="none"/>
</g></svg><svg class="abs" style="left:0;top:0" width="751" height="660" viewBox="0 0 751 660" shape-rendering="crispEdges">
<style>ellipse,circle{shape-rendering:auto;stroke-width:1.25}</style>



<g fill="none" stroke="#fff" stroke-width="1">
<g>
<rect x="74" y="204.5" width="18.00" height="3.30" fill="#fff" fill-opacity="0.45" stroke="none"/>
<rect x="69" y="212.5" width="5.00" height="3.50" fill="#fff" fill-opacity="0.55" stroke="none"/><rect x="88.2" y="212.5" width="4.80" height="3.50" fill="#fff" fill-opacity="0.55" stroke="none"/>
<path d="M75,219.9 H93 M75,219.9 L77,218.2 M75,219.9 L77,221.6 M93,219.9 L91,218.2 M93,219.9 L91,221.6"/>
<path d="M64.7,231.6 H99.5 V243 H64.7 Z M70.6,231.6 V243 M70.6,235.2 H107.6 V239.5 H70.6 M66,241.8 L70,237.8 M72.5,234 L74.5,232.6"/>
<path d="M67.5,243 V246 L69.7,248.00 L67.8,250.00 L69.7,252.00 L67.5,254 V262 L69.7,263.75 L67.8,265.50 L69.7,267.25 L67.5,269 V277 L69.7,279.00 L67.8,281.00 L69.7,283.00 L67.5,285 V301 L69.7,304.00 L67.8,307.00 L69.7,310.00 L67.5,313 V322 H77.3"/>
<path d="M97.3,243 V246 L99.5,248.00 L97.6,250.00 L99.5,252.00 L97.3,254 V262 L99.5,263.75 L97.6,265.50 L99.5,267.25 L97.3,269 V277 L99.5,279.00 L97.6,281.00 L99.5,283.00 L97.3,285 V301 L99.5,304.00 L97.6,307.00 L99.5,310.00 L97.3,313 V322 H87"/>
<circle cx="67.4" cy="294.8" r="4.9" fill="#000"/><circle cx="97.3" cy="294.8" r="4.9" fill="#000"/>
<path d="M63.2,297.5 L65,299.3 M93.1,297.5 L94.9,299.3" stroke-width="1.3"/>
<rect x="59.6" y="271" width="2.20" height="19.50" fill="#fff" fill-opacity="0.6" stroke="none"/><rect x="104.6" y="271" width="2.20" height="19.50" fill="#fff" fill-opacity="0.6" stroke="none"/>
<path d="M77.3,322 V464 M87,322 V428.4"/>
<path d="M77.3,348.4 H69.3 V367.4 H77.3 M87,348.4 H95.8 V367.4 H87"/>
<g fill="#000"><ellipse cx="77.3" cy="357.5" rx="4.2" ry="2.8"/><path d="M73.6,357.8 H81.0 M75.1,357.8 L77.3,355.3 L79.5,357.8"/><ellipse cx="87" cy="357.5" rx="4.2" ry="2.8"/><path d="M83.3,357.8 H90.7 M84.8,357.8 L87,355.3 L89.2,357.8"/><circle cx="69.3" cy="357.5" r="1.8"/><circle cx="95.8" cy="357.5" r="1.6"/></g>
<ellipse cx="59.7" cy="365.7" rx="4.2" ry="1.7"/><path d="M57.2,367.09999999999997 L59.2,365.7 H61.2"/><ellipse cx="106.5" cy="365.7" rx="4.2" ry="1.7"/><path d="M104.0,367.09999999999997 L106.0,365.7 H108.0"/>
<ellipse cx="61" cy="383" rx="3.6" ry="1.8"/><path d="M58.5,384.5 L60.5,383 H62.5"/><ellipse cx="61" cy="390.1" rx="3.6" ry="1.8"/><path d="M58.5,391.6 L60.5,390.1 H62.5"/>
<path d="M71,376 V378 L72.5,380 L70,382 L72.5,384 L71,386 V389 L72.5,391 L70,393 L71,395 V409.7 H77.3"/>
<g fill="#000"><circle cx="71" cy="375.8" r="1.5"/><circle cx="71" cy="387.5" r="1.3"/><circle cx="71" cy="394.5" r="1.3"/><circle cx="71" cy="398.5" r="1.3"/></g>
<path d="M64,397.5 H67.2" stroke-width="1.2"/>
<path d="M87,383.9 H219.7 V428.4 M77.3,389.5 H210.6 V428.4"/>
<g fill="#000"><ellipse cx="81.8" cy="393" rx="3.6" ry="1.8"/><path d="M79.3,394.5 L81.3,393 H83.3"/><ellipse cx="92.6" cy="393" rx="3.6" ry="1.8"/><path d="M90.1,394.5 L92.1,393 H94.1"/><circle cx="77.3" cy="395.2" r="1.3"/><circle cx="77.3" cy="398.9" r="1.3"/><circle cx="93.8" cy="397.5" r="1.3"/></g>
<path d="M87,409.7 H93.8 V399"/>
<ellipse cx="64.2" cy="405.7" rx="4.2" ry="1.7"/><path d="M61.7,407.09999999999997 L63.7,405.7 H65.7"/><ellipse cx="101.1" cy="405.7" rx="4.2" ry="1.7"/><path d="M98.6,407.09999999999997 L100.6,405.7 H102.6"/>
<path d="M87,415.3 H149.2 M77.3,421.6 H139.6"/>
<path d="M139.6,398.8 V413.8 L141,415.3 L139.6,417 V428.4 M149.2,398.8 V428.4 M137.6,398.8 H142 M147.2,398.8 H151.6" />
<path d="M137.6,398 H142 M147.2,398 H151.6" stroke-width="2"/>
<g transform="translate(77.3,0)">
<path d="M-4.4,430 V436.4 H1.9 V428.2 H-3 M-2.5,433 L-0.5,435.5 M1,430 L3,428.5"/><circle cx="-3.9" cy="431.5" r="1.5" fill="#000"/><rect x="-1" y="429" width="2.50" height="6.50" fill="#fff" fill-opacity="0.9" stroke="none"/>
<path d="M7.9,428.2 H14.7 V436.4 H9.5 M14.7,431.5 H16.3 M8.5,432 Q11,429.5 9,434.5 M10.5,431 Q13.5,433 11,435.5 M7.2,435 L9,433.8"/><circle cx="11.9" cy="429.6" r="0.9"/>
<rect x="-3.1" y="442" width="6.5" height="6.9"/><circle cx="0.1" cy="445.4" r="1.4"/>
<rect x="6.2" y="442" width="7.2" height="6.9"/><path d="M8,445.4 H11.5 M9,444 L11.5,445.4 L9,446.8"/>
<ellipse cx="-9.3" cy="439.8" rx="4" ry="1.6"/><path d="M-11.8,441.1 L-9.8,439.8 H-7.800000000000001"/><ellipse cx="-9.3" cy="448" rx="4" ry="1.6"/><path d="M-11.8,449.3 L-9.8,448 H-7.800000000000001"/>
<path d="M0,436.4 V442 M9.7,436.4 V442 M9.7,422 V428.4 M0,423 V428.4"/>
<path d="M0,448.9 V464 M9.7,448.9 V452.5 H3.1 V464 M-1.5,452.5 H1.5 M3.1,455.7 H9.7 V458.5"/>
</g>
<g transform="translate(139.6,0)">
<path d="M-4.4,430 V436.4 H1.9 V428.2 H-3 M-2.5,433 L-0.5,435.5 M1,430 L3,428.5"/><circle cx="-3.9" cy="431.5" r="1.5" fill="#000"/><rect x="-1" y="429" width="2.50" height="6.50" fill="#fff" fill-opacity="0.9" stroke="none"/>
<path d="M7.9,428.2 H14.7 V436.4 H9.5 M14.7,431.5 H16.3 M8.5,432 Q11,429.5 9,434.5 M10.5,431 Q13.5,433 11,435.5 M7.2,435 L9,433.8"/><circle cx="11.9" cy="429.6" r="0.9"/>
<rect x="-3.1" y="442" width="6.5" height="6.9"/><circle cx="0.1" cy="445.4" r="1.4"/>
<rect x="6.2" y="442" width="7.2" height="6.9"/><path d="M8,445.4 H11.5 M9,444 L11.5,445.4 L9,446.8"/>
<ellipse cx="-9.3" cy="439.8" rx="4" ry="1.6"/><path d="M-11.8,441.1 L-9.8,439.8 H-7.800000000000001"/><ellipse cx="-9.3" cy="448" rx="4" ry="1.6"/><path d="M-11.8,449.3 L-9.8,448 H-7.800000000000001"/>
<path d="M0,436.4 V442 M9.7,436.4 V442 M9.7,422 V428.4 M0,423 V428.4"/>
<path d="M0,448.9 V464 M9.7,448.9 V452.5 H3.1 V464 M-1.5,452.5 H1.5 M3.1,455.7 H9.7 V458.5"/>
</g>
<g transform="translate(210.6,0)">
<path d="M-4.4,430 V436.4 H1.9 V428.2 H-3 M-2.5,433 L-0.5,435.5 M1,430 L3,428.5"/><circle cx="-3.9" cy="431.5" r="1.5" fill="#000"/><rect x="-1" y="429" width="2.50" height="6.50" fill="#fff" fill-opacity="0.9" stroke="none"/>
<path d="M7.9,428.2 H14.7 V436.4 H9.5 M14.7,431.5 H16.3 M8.5,432 Q11,429.5 9,434.5 M10.5,431 Q13.5,433 11,435.5 M7.2,435 L9,433.8"/><circle cx="11.9" cy="429.6" r="0.9"/>
<rect x="-3.1" y="442" width="6.5" height="6.9"/><circle cx="0.1" cy="445.4" r="1.4"/>
<rect x="6.2" y="442" width="7.2" height="6.9"/><path d="M8,445.4 H11.5 M9,444 L11.5,445.4 L9,446.8"/>
<ellipse cx="-9.3" cy="439.8" rx="4" ry="1.6"/><path d="M-11.8,441.1 L-9.8,439.8 H-7.800000000000001"/><ellipse cx="-9.3" cy="448" rx="4" ry="1.6"/><path d="M-11.8,449.3 L-9.8,448 H-7.800000000000001"/>
<path d="M0,436.4 V442 M9.7,436.4 V442 M9.7,422 V428.4 M0,423 V428.4"/>
<path d="M0,448.9 V464 M9.7,448.9 V452.5 H3.1 V464 M-1.5,452.5 H1.5 M3.1,455.7 H9.7 V458.5"/>
</g>
<ellipse cx="68" cy="459.7" rx="4" ry="1.6"/><path d="M65.5,461.0 L67.5,459.7 H69.5"/><ellipse cx="130.3" cy="459.7" rx="4" ry="1.6"/><path d="M127.80000000000001,461.0 L129.8,459.7 H131.8"/>
<g transform="translate(77.3,0)">
<path d="M-12.8,465.5 V471 M-10.8,471 V465.2 L-8.8,468 L-6.8,465.2 V471 M-5.5,465.2 H-2 V471 H-5.5 Z M2.2,465.2 H-0.8 V468 H2.2 V471 H-0.8 M2.7,465.2 H6.2 M4.5,465.2 V471 M7.5,465.2 V471 M8.7,471 V465.2 L11.7,471 V465.2 M13.2,465.2 V471 M13.2,468 L15.7,465.5 M13.5,468.5 L16,471" stroke-width="1.2"/>
<rect x="-16.8" y="472" width="7.80" height="3.00" fill="#fff" fill-opacity="1" stroke="none"/><rect x="11" y="472" width="8.00" height="3.00" fill="#fff" fill-opacity="1" stroke="none"/>
<path d="M-13,464.2 V471.2 H16.5 V464.2"/>
</g>
<g transform="translate(139.6,0)">
<path d="M-12.8,465.5 V471 M-10.8,471 V465.2 L-8.8,468 L-6.8,465.2 V471 M-5.5,465.2 H-2 V471 H-5.5 Z M2.2,465.2 H-0.8 V468 H2.2 V471 H-0.8 M2.7,465.2 H6.2 M4.5,465.2 V471 M7.5,465.2 V471 M8.7,471 V465.2 L11.7,471 V465.2 M13.2,465.2 V471 M13.2,468 L15.7,465.5 M13.5,468.5 L16,471" stroke-width="1.2"/>
<rect x="-16.8" y="472" width="7.80" height="3.00" fill="#fff" fill-opacity="1" stroke="none"/><rect x="11" y="472" width="8.00" height="3.00" fill="#fff" fill-opacity="1" stroke="none"/>
<path d="M-13,464.2 V471.2 H16.5 V464.2"/>
</g>
<path d="M202.8,464.2 H221.8 V471.4 H202.8 Z M204.5,465.5 L208,470.5 M208,465.5 L204.5,470.5 M212,465.3 H209.2 V468 H212 V470.5 H209.2 M213.6,465.3 V470.8 M215.3,465.3 H218.3 V470.5 H215.3 Z M219.8,465.3 V470.8 M202.8,467.8 H197.5 M197.5,465.2 V470.5 M196,465.8 L197.8,464 M221.8,467.8 H223.5 L224.8,465 L225.8,470 L227.2,465.8"/>
<rect x="193" y="475.3" width="7.00" height="2.40" fill="#fff" fill-opacity="1" stroke="none"/>
<ellipse cx="186" cy="469" rx="4.2" ry="1.7"/><path d="M183.5,470.4 L185.5,469 H187.5"/>
<g fill="#000"><ellipse cx="214" cy="393" rx="3.6" ry="1.8"/><path d="M211.5,394.5 L213.5,393 H215.5"/><ellipse cx="225.4" cy="393" rx="3.6" ry="1.8"/><path d="M222.9,394.5 L224.9,393 H226.9"/><circle cx="210.6" cy="395.2" r="1.3"/><circle cx="210.6" cy="398.9" r="1.3"/><circle cx="225.5" cy="397.5" r="1.3"/></g>
<path d="M203.4,399 V409.3 H210.6 M219.7,409.3 H226.6 V399.5 M201.8,398 Q203.4,396 205,398"/>
<ellipse cx="197.2" cy="405.8" rx="4.2" ry="1.7"/><path d="M194.7,407.2 L196.7,405.8 H198.7"/><ellipse cx="233.4" cy="405.8" rx="4.2" ry="1.7"/><path d="M230.9,407.2 L232.9,405.8 H234.9"/>
<path d="M219.7,415.6 H247.5 V483.4 H213.4 M210.6,421.6 H237.4 V483.4"/>
<g fill="#000"><circle cx="237.4" cy="436.2" r="1.4"/><circle cx="237.4" cy="439.8" r="1.4"/></g>
<path d="M245.5,434 H249.5 M245.5,441 H249.5 M247.5,434 V441" stroke-width="1.3"/>
<ellipse cx="232" cy="444.6" rx="4.2" ry="1.7"/><path d="M229.5,446.0 L231.5,444.6 H233.5"/><ellipse cx="253.5" cy="444.6" rx="4.2" ry="1.7"/><path d="M251.0,446.0 L253.0,444.6 H255.0"/>
<path d="M77.3,471 V528.5 M80.4,471 V500.8 H87 V520.6 A1.9,1.9 0 0 1 87,524.4 V526.6 A1.9,1.9 0 0 1 87,530.4 V534.4"/>
<path d="M139.6,475 V493.4 M143.2,475 V493.4 M80.4,477.5 H139.6 M80.4,483.7 H143.2"/>
<path d="M210.6,471.4 V522.5 M213.4,471.4 V500 H219.4 V520.6 A1.9,1.9 0 0 1 219.4,524.4 V526.6 A1.9,1.9 0 0 1 219.4,530.4 V534.4"/>
<g fill="#000"><circle cx="77.3" cy="507.6" r="1.5"/><circle cx="77.3" cy="511.4" r="1.5"/><circle cx="87" cy="510" r="1.5"/><circle cx="210.6" cy="508.2" r="1.5"/><circle cx="210.6" cy="512" r="1.5"/><circle cx="219.4" cy="510" r="1.5"/></g>
<ellipse cx="69.6" cy="510" rx="4.3" ry="1.9"/><path d="M67.1,511.59999999999997 L69.1,510 H71.1"/><ellipse cx="95.8" cy="510" rx="4.3" ry="1.9"/><path d="M93.3,511.59999999999997 L95.3,510 H97.3"/><ellipse cx="202" cy="510" rx="4.3" ry="1.9"/><path d="M199.5,511.59999999999997 L201.5,510 H203.5"/><ellipse cx="229" cy="510" rx="4.3" ry="1.9"/><path d="M226.5,511.59999999999997 L228.5,510 H230.5"/>
<path d="M74,494 L73.5,497.5 M75,494 H77.3 M83,494 V497.5 M81,494 H84 M207,494 L206.5,497.5 M208,494 H210.6 M216,494 V497.5 M214,494 H217" stroke-width="1.1"/>
<path d="M33.6,338.5 V493.3" stroke-dasharray="21 3 5 3" stroke-dashoffset="4.5"/>
<path d="M260.7,338.5 V493.3" stroke-dasharray="21 3 5 3" stroke-dashoffset="28.5"/>
<path d="M108.6,402.3 V493.3 M174.5,402.3 V493.3" stroke-dasharray="21 3 5 3" stroke-dashoffset="28.3"/>
<path d="M33.6,402.3 H260.7" stroke-dasharray="21 3 5 3" stroke-dashoffset="9"/>
<path d="M33.6,493.3 H260.7" stroke-dasharray="21 3 5 3" stroke-dashoffset="30.6"/>
</g>
<g transform="translate(242,0)">
<rect x="74" y="204.5" width="18.00" height="3.30" fill="#fff" fill-opacity="0.45" stroke="none"/>
<rect x="69" y="212.5" width="5.00" height="3.50" fill="#fff" fill-opacity="0.55" stroke="none"/><rect x="88.2" y="212.5" width="4.80" height="3.50" fill="#fff" fill-opacity="0.55" stroke="none"/>
<path d="M75,219.9 H93 M75,219.9 L77,218.2 M75,219.9 L77,221.6 M93,219.9 L91,218.2 M93,219.9 L91,221.6"/>
<path d="M64.7,231.6 H99.5 V243 H64.7 Z M70.6,231.6 V243 M70.6,235.2 H107.6 V239.5 H70.6 M66,241.8 L70,237.8 M72.5,234 L74.5,232.6"/>
<path d="M67.5,243 V246 L69.7,248.00 L67.8,250.00 L69.7,252.00 L67.5,254 V262 L69.7,263.75 L67.8,265.50 L69.7,267.25 L67.5,269 V277 L69.7,279.00 L67.8,281.00 L69.7,283.00 L67.5,285 V301 L69.7,304.00 L67.8,307.00 L69.7,310.00 L67.5,313 V322 H77.3"/>
<path d="M97.3,243 V246 L99.5,248.00 L97.6,250.00 L99.5,252.00 L97.3,254 V262 L99.5,263.75 L97.6,265.50 L99.5,267.25 L97.3,269 V277 L99.5,279.00 L97.6,281.00 L99.5,283.00 L97.3,285 V301 L99.5,304.00 L97.6,307.00 L99.5,310.00 L97.3,313 V322 H87"/>
<circle cx="67.4" cy="294.8" r="4.9" fill="#000"/><circle cx="97.3" cy="294.8" r="4.9" fill="#000"/>
<path d="M63.2,297.5 L65,299.3 M93.1,297.5 L94.9,299.3" stroke-width="1.3"/>
<rect x="59.6" y="271" width="2.20" height="19.50" fill="#fff" fill-opacity="0.6" stroke="none"/><rect x="104.6" y="271" width="2.20" height="19.50" fill="#fff" fill-opacity="0.6" stroke="none"/>
<path d="M77.3,322 V464 M87,322 V428.4"/>
<path d="M77.3,348.4 H69.3 V367.4 H77.3 M87,348.4 H95.8 V367.4 H87"/>
<g fill="#000"><ellipse cx="77.3" cy="357.5" rx="4.2" ry="2.8"/><path d="M73.6,357.8 H81.0 M75.1,357.8 L77.3,355.3 L79.5,357.8"/><ellipse cx="87" cy="357.5" rx="4.2" ry="2.8"/><path d="M83.3,357.8 H90.7 M84.8,357.8 L87,355.3 L89.2,357.8"/><circle cx="69.3" cy="357.5" r="1.8"/><circle cx="95.8" cy="357.5" r="1.6"/></g>
<ellipse cx="59.7" cy="365.7" rx="4.2" ry="1.7"/><path d="M57.2,367.09999999999997 L59.2,365.7 H61.2"/><ellipse cx="106.5" cy="365.7" rx="4.2" ry="1.7"/><path d="M104.0,367.09999999999997 L106.0,365.7 H108.0"/>
<ellipse cx="61" cy="383" rx="3.6" ry="1.8"/><path d="M58.5,384.5 L60.5,383 H62.5"/><ellipse cx="61" cy="390.1" rx="3.6" ry="1.8"/><path d="M58.5,391.6 L60.5,390.1 H62.5"/>
<path d="M71,376 V378 L72.5,380 L70,382 L72.5,384 L71,386 V389 L72.5,391 L70,393 L71,395 V409.7 H77.3"/>
<g fill="#000"><circle cx="71" cy="375.8" r="1.5"/><circle cx="71" cy="387.5" r="1.3"/><circle cx="71" cy="394.5" r="1.3"/><circle cx="71" cy="398.5" r="1.3"/></g>
<path d="M64,397.5 H67.2" stroke-width="1.2"/>
<path d="M87,383.9 H219.7 V428.4 M77.3,389.5 H210.6 V428.4"/>
<g fill="#000"><ellipse cx="81.8" cy="393" rx="3.6" ry="1.8"/><path d="M79.3,394.5 L81.3,393 H83.3"/><ellipse cx="92.6" cy="393" rx="3.6" ry="1.8"/><path d="M90.1,394.5 L92.1,393 H94.1"/><circle cx="77.3" cy="395.2" r="1.3"/><circle cx="77.3" cy="398.9" r="1.3"/><circle cx="93.8" cy="397.5" r="1.3"/></g>
<path d="M87,409.7 H93.8 V399"/>
<ellipse cx="64.2" cy="405.7" rx="4.2" ry="1.7"/><path d="M61.7,407.09999999999997 L63.7,405.7 H65.7"/><ellipse cx="101.1" cy="405.7" rx="4.2" ry="1.7"/><path d="M98.6,407.09999999999997 L100.6,405.7 H102.6"/>
<path d="M87,415.3 H149.2 M77.3,421.6 H139.6"/>
<path d="M139.6,398.8 V413.8 L141,415.3 L139.6,417 V428.4 M149.2,398.8 V428.4 M137.6,398.8 H142 M147.2,398.8 H151.6" />
<path d="M137.6,398 H142 M147.2,398 H151.6" stroke-width="2"/>
<g transform="translate(77.3,0)">
<path d="M-4.4,430 V436.4 H1.9 V428.2 H-3 M-2.5,433 L-0.5,435.5 M1,430 L3,428.5"/><circle cx="-3.9" cy="431.5" r="1.5" fill="#000"/><rect x="-1" y="429" width="2.50" height="6.50" fill="#fff" fill-opacity="0.9" stroke="none"/>
<path d="M7.9,428.2 H14.7 V436.4 H9.5 M14.7,431.5 H16.3 M8.5,432 Q11,429.5 9,434.5 M10.5,431 Q13.5,433 11,435.5 M7.2,435 L9,433.8"/><circle cx="11.9" cy="429.6" r="0.9"/>
<rect x="-3.1" y="442" width="6.5" height="6.9"/><circle cx="0.1" cy="445.4" r="1.4"/>
<rect x="6.2" y="442" width="7.2" height="6.9"/><path d="M8,445.4 H11.5 M9,444 L11.5,445.4 L9,446.8"/>
<ellipse cx="-9.3" cy="439.8" rx="4" ry="1.6"/><path d="M-11.8,441.1 L-9.8,439.8 H-7.800000000000001"/><ellipse cx="-9.3" cy="448" rx="4" ry="1.6"/><path d="M-11.8,449.3 L-9.8,448 H-7.800000000000001"/>
<path d="M0,436.4 V442 M9.7,436.4 V442 M9.7,422 V428.4 M0,423 V428.4"/>
<path d="M0,448.9 V464 M9.7,448.9 V452.5 H3.1 V464 M-1.5,452.5 H1.5 M3.1,455.7 H9.7 V458.5"/>
</g>
<g transform="translate(139.6,0)">
<path d="M-4.4,430 V436.4 H1.9 V428.2 H-3 M-2.5,433 L-0.5,435.5 M1,430 L3,428.5"/><circle cx="-3.9" cy="431.5" r="1.5" fill="#000"/><rect x="-1" y="429" width="2.50" height="6.50" fill="#fff" fill-opacity="0.9" stroke="none"/>
<path d="M7.9,428.2 H14.7 V436.4 H9.5 M14.7,431.5 H16.3 M8.5,432 Q11,429.5 9,434.5 M10.5,431 Q13.5,433 11,435.5 M7.2,435 L9,433.8"/><circle cx="11.9" cy="429.6" r="0.9"/>
<rect x="-3.1" y="442" width="6.5" height="6.9"/><circle cx="0.1" cy="445.4" r="1.4"/>
<rect x="6.2" y="442" width="7.2" height="6.9"/><path d="M8,445.4 H11.5 M9,444 L11.5,445.4 L9,446.8"/>
<ellipse cx="-9.3" cy="439.8" rx="4" ry="1.6"/><path d="M-11.8,441.1 L-9.8,439.8 H-7.800000000000001"/><ellipse cx="-9.3" cy="448" rx="4" ry="1.6"/><path d="M-11.8,449.3 L-9.8,448 H-7.800000000000001"/>
<path d="M0,436.4 V442 M9.7,436.4 V442 M9.7,422 V428.4 M0,423 V428.4"/>
<path d="M0,448.9 V464 M9.7,448.9 V452.5 H3.1 V464 M-1.5,452.5 H1.5 M3.1,455.7 H9.7 V458.5"/>
</g>
<g transform="translate(210.6,0)">
<path d="M-4.4,430 V436.4 H1.9 V428.2 H-3 M-2.5,433 L-0.5,435.5 M1,430 L3,428.5"/><circle cx="-3.9" cy="431.5" r="1.5" fill="#000"/><rect x="-1" y="429" width="2.50" height="6.50" fill="#fff" fill-opacity="0.9" stroke="none"/>
<path d="M7.9,428.2 H14.7 V436.4 H9.5 M14.7,431.5 H16.3 M8.5,432 Q11,429.5 9,434.5 M10.5,431 Q13.5,433 11,435.5 M7.2,435 L9,433.8"/><circle cx="11.9" cy="429.6" r="0.9"/>
<rect x="-3.1" y="442" width="6.5" height="6.9"/><circle cx="0.1" cy="445.4" r="1.4"/>
<rect x="6.2" y="442" width="7.2" height="6.9"/><path d="M8,445.4 H11.5 M9,444 L11.5,445.4 L9,446.8"/>
<ellipse cx="-9.3" cy="439.8" rx="4" ry="1.6"/><path d="M-11.8,441.1 L-9.8,439.8 H-7.800000000000001"/><ellipse cx="-9.3" cy="448" rx="4" ry="1.6"/><path d="M-11.8,449.3 L-9.8,448 H-7.800000000000001"/>
<path d="M0,436.4 V442 M9.7,436.4 V442 M9.7,422 V428.4 M0,423 V428.4"/>
<path d="M0,448.9 V464 M9.7,448.9 V452.5 H3.1 V464 M-1.5,452.5 H1.5 M3.1,455.7 H9.7 V458.5"/>
</g>
<ellipse cx="68" cy="459.7" rx="4" ry="1.6"/><path d="M65.5,461.0 L67.5,459.7 H69.5"/><ellipse cx="130.3" cy="459.7" rx="4" ry="1.6"/><path d="M127.80000000000001,461.0 L129.8,459.7 H131.8"/>
<g transform="translate(77.3,0)">
<path d="M-12.8,465.5 V471 M-10.8,471 V465.2 L-8.8,468 L-6.8,465.2 V471 M-5.5,465.2 H-2 V471 H-5.5 Z M2.2,465.2 H-0.8 V468 H2.2 V471 H-0.8 M2.7,465.2 H6.2 M4.5,465.2 V471 M7.5,465.2 V471 M8.7,471 V465.2 L11.7,471 V465.2 M13.2,465.2 V471 M13.2,468 L15.7,465.5 M13.5,468.5 L16,471" stroke-width="1.2"/>
<rect x="-16.8" y="472" width="7.80" height="3.00" fill="#fff" fill-opacity="1" stroke="none"/><rect x="11" y="472" width="8.00" height="3.00" fill="#fff" fill-opacity="1" stroke="none"/>
<path d="M-13,464.2 V471.2 H16.5 V464.2"/>
</g>
<g transform="translate(139.6,0)">
<path d="M-12.8,465.5 V471 M-10.8,471 V465.2 L-8.8,468 L-6.8,465.2 V471 M-5.5,465.2 H-2 V471 H-5.5 Z M2.2,465.2 H-0.8 V468 H2.2 V471 H-0.8 M2.7,465.2 H6.2 M4.5,465.2 V471 M7.5,465.2 V471 M8.7,471 V465.2 L11.7,471 V465.2 M13.2,465.2 V471 M13.2,468 L15.7,465.5 M13.5,468.5 L16,471" stroke-width="1.2"/>
<rect x="-16.8" y="472" width="7.80" height="3.00" fill="#fff" fill-opacity="1" stroke="none"/><rect x="11" y="472" width="8.00" height="3.00" fill="#fff" fill-opacity="1" stroke="none"/>
<path d="M-13,464.2 V471.2 H16.5 V464.2"/>
</g>
<path d="M202.8,464.2 H221.8 V471.4 H202.8 Z M204.5,465.5 L208,470.5 M208,465.5 L204.5,470.5 M212,465.3 H209.2 V468 H212 V470.5 H209.2 M213.6,465.3 V470.8 M215.3,465.3 H218.3 V470.5 H215.3 Z M219.8,465.3 V470.8 M202.8,467.8 H197.5 M197.5,465.2 V470.5 M196,465.8 L197.8,464 M221.8,467.8 H223.5 L224.8,465 L225.8,470 L227.2,465.8"/>
<rect x="193" y="475.3" width="7.00" height="2.40" fill="#fff" fill-opacity="1" stroke="none"/>
<ellipse cx="186" cy="469" rx="4.2" ry="1.7"/><path d="M183.5,470.4 L185.5,469 H187.5"/>
<g fill="#000"><ellipse cx="214" cy="393" rx="3.6" ry="1.8"/><path d="M211.5,394.5 L213.5,393 H215.5"/><ellipse cx="225.4" cy="393" rx="3.6" ry="1.8"/><path d="M222.9,394.5 L224.9,393 H226.9"/><circle cx="210.6" cy="395.2" r="1.3"/><circle cx="210.6" cy="398.9" r="1.3"/><circle cx="225.5" cy="397.5" r="1.3"/></g>
<path d="M203.4,399 V409.3 H210.6 M219.7,409.3 H226.6 V399.5 M201.8,398 Q203.4,396 205,398"/>
<ellipse cx="197.2" cy="405.8" rx="4.2" ry="1.7"/><path d="M194.7,407.2 L196.7,405.8 H198.7"/><ellipse cx="233.4" cy="405.8" rx="4.2" ry="1.7"/><path d="M230.9,407.2 L232.9,405.8 H234.9"/>
<path d="M219.7,415.6 H247.5 V483.4 H213.4 M210.6,421.6 H237.4 V483.4"/>
<g fill="#000"><circle cx="237.4" cy="436.2" r="1.4"/><circle cx="237.4" cy="439.8" r="1.4"/></g>
<path d="M245.5,434 H249.5 M245.5,441 H249.5 M247.5,434 V441" stroke-width="1.3"/>
<ellipse cx="232" cy="444.6" rx="4.2" ry="1.7"/><path d="M229.5,446.0 L231.5,444.6 H233.5"/><ellipse cx="253.5" cy="444.6" rx="4.2" ry="1.7"/><path d="M251.0,446.0 L253.0,444.6 H255.0"/>
<path d="M77.3,471 V528.5 M80.4,471 V500.8 H87 V520.6 A1.9,1.9 0 0 1 87,524.4 V526.6 A1.9,1.9 0 0 1 87,530.4 V534.4"/>
<path d="M139.6,475 V493.4 M143.2,475 V493.4 M80.4,477.5 H139.6 M80.4,483.7 H143.2"/>
<path d="M210.6,471.4 V522.5 M213.4,471.4 V500 H219.4 V520.6 A1.9,1.9 0 0 1 219.4,524.4 V526.6 A1.9,1.9 0 0 1 219.4,530.4 V534.4"/>
<g fill="#000"><circle cx="77.3" cy="507.6" r="1.5"/><circle cx="77.3" cy="511.4" r="1.5"/><circle cx="87" cy="510" r="1.5"/><circle cx="210.6" cy="508.2" r="1.5"/><circle cx="210.6" cy="512" r="1.5"/><circle cx="219.4" cy="510" r="1.5"/></g>
<ellipse cx="69.6" cy="510" rx="4.3" ry="1.9"/><path d="M67.1,511.59999999999997 L69.1,510 H71.1"/><ellipse cx="95.8" cy="510" rx="4.3" ry="1.9"/><path d="M93.3,511.59999999999997 L95.3,510 H97.3"/><ellipse cx="202" cy="510" rx="4.3" ry="1.9"/><path d="M199.5,511.59999999999997 L201.5,510 H203.5"/><ellipse cx="229" cy="510" rx="4.3" ry="1.9"/><path d="M226.5,511.59999999999997 L228.5,510 H230.5"/>
<path d="M74,494 L73.5,497.5 M75,494 H77.3 M83,494 V497.5 M81,494 H84 M207,494 L206.5,497.5 M208,494 H210.6 M216,494 V497.5 M214,494 H217" stroke-width="1.1"/>
<path d="M33.6,338.5 V493.3" stroke-dasharray="21 3 5 3" stroke-dashoffset="4.5"/>
<path d="M260.7,338.5 V493.3" stroke-dasharray="21 3 5 3" stroke-dashoffset="28.5"/>
<path d="M108.6,402.3 V493.3 M174.5,402.3 V493.3" stroke-dasharray="21 3 5 3" stroke-dashoffset="28.3"/>
<path d="M33.6,402.3 H260.7" stroke-dasharray="21 3 5 3" stroke-dashoffset="9"/>
<path d="M33.6,493.3 H260.7" stroke-dasharray="21 3 5 3" stroke-dashoffset="30.6"/>
</g>
<path d="M23,258.5 H513.8" stroke-dasharray="21 3 5 3" stroke-dashoffset="5"/>
<path d="M24.2,338.5 H513.6" stroke-dasharray="21 3 5 3" stroke-dashoffset="5"/>
<path d="M509.6,226.2 V349.5"/>
<rect x="514.5" y="236" width="2.50" height="12.00" fill="#fff" fill-opacity="0.8" stroke="none"/><rect x="514.8" y="286" width="2.40" height="7.00" fill="#fff" fill-opacity="0.7" stroke="none"/><rect x="515" y="347.5" width="3.50" height="2.00" fill="#fff" fill-opacity="0.8" stroke="none"/><rect x="515" y="351.5" width="3.50" height="2.00" fill="#fff" fill-opacity="0.8" stroke="none"/>
<path d="M43.4,517 V546 M43.4,522.5 H508.7 M43.4,528.5 H508.7 M43.4,534.4 H508.7 M508.7,520 V537"/>
<rect x="47" y="518" width="7.00" height="3.00" fill="#fff" fill-opacity="0.85" stroke="none"/><rect x="47.5" y="524.2" width="6.50" height="2.80" fill="#fff" fill-opacity="0.85" stroke="none"/><rect x="47" y="530.5" width="7.00" height="2.80" fill="#fff" fill-opacity="0.85" stroke="none"/>
<rect x="38" y="520" width="4.00" height="4.00" fill="#fff" fill-opacity="0.85" stroke="none"/><rect x="38.2" y="527" width="2.30" height="4.00" fill="#fff" fill-opacity="0.8" stroke="none"/><rect x="38.5" y="532.5" width="2.00" height="4.50" fill="#fff" fill-opacity="0.8" stroke="none"/><rect x="33" y="527" width="3.00" height="9.00" fill="#fff" fill-opacity="0.7" stroke="none"/>
<path d="M473.5,522.5 V512.5 H483 V520.6 A1.9,1.9 0 0 1 483,524.4 V528.5 M492.5,528.5 V524.4 A1.9,1.9 0 0 1 492.5,520.6 V512.5 H502.5 V520.6 A1.9,1.9 0 0 1 502.5,524.4 V526.6 A1.9,1.9 0 0 1 502.5,530.4 V534.4"/>
<rect x="475.8" y="511" width="2.70" height="3.00" fill="#fff" fill-opacity="1" stroke="none"/><rect x="479.8" y="511" width="2.70" height="3.00" fill="#fff" fill-opacity="1" stroke="none"/><rect x="494.5" y="511" width="3.00" height="3.00" fill="#fff" fill-opacity="1" stroke="none"/><rect x="499.5" y="511" width="2.50" height="3.00" fill="#fff" fill-opacity="1" stroke="none"/>
<ellipse cx="480.5" cy="508" rx="4.3" ry="1.9"/><path d="M478.0,509.59999999999997 L480.0,508 H482.0"/><ellipse cx="497" cy="508" rx="4.3" ry="1.9"/><path d="M494.5,509.59999999999997 L496.5,508 H498.5"/>
<path d="M496.5,635 L498,637.5 L500,634.5"/>
<path d="M668.6,188.1 V658.5 M4.1,658.5 H668.6 M17.9,649.6 H660.6"/>
</g>
</svg></body></html>
